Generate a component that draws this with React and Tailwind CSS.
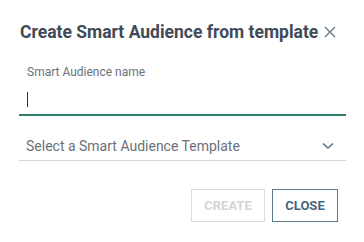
export default function App() {
  return (
    <div className="w-[364px] h-[242px] bg-white" style={{ fontFamily: "Roboto, 'Liberation Sans', sans-serif" }}>
      <div className="pl-[19px] pr-[18px] pt-[21px]">
        <div className="flex items-center justify-between pr-[10px]">
          <h1 className="text-[17.5px] leading-[22px] font-bold text-[#414a57] pl-[1px]">Create Smart Audience from template</h1>
          <svg width="12" height="12" viewBox="0 0 12 12" className="text-[#5f7686]">
            <path d="M1 1L11 11M11 1L1 11" stroke="currentColor" strokeWidth="1.3" fill="none" />
          </svg>
        </div>
        <div className="mt-[21px] border-b-2 border-[#2e7a6c]">
          <div className="pl-[8px] text-[12px] leading-[16px] text-[#6b7079]">Smart Audience name</div>
          <div className="pl-[8px] pt-[4px] h-[34px] flex items-center">
            <div className="w-[1px] h-[15px] bg-[#333]"></div>
          </div>
        </div>
        <div className="mt-[20px] h-[25px] flex items-start justify-between border-b border-[#d3d6db]">
          <span className="pl-[7px] text-[14px] leading-[20px] text-[#6b7079]">Select a Smart Audience Template</span>
          <svg width="12" height="8" viewBox="0 0 12 8" className="mr-[12px] mt-[6px] text-[#4e6a80]">
            <path d="M1 1.5L6 6L11 1.5" stroke="currentColor" strokeWidth="1.4" fill="none" />
          </svg>
        </div>
        <div className="mt-[28px] flex justify-end gap-[7px] pr-[8px]">
          <button className="w-[74px] h-[33px] border border-[#dcdcdc] text-[13px] font-bold text-[#d4d4d4]">CREATE</button>
          <button className="w-[66px] h-[33px] border border-[#57788a] text-[13px] font-bold text-[#46667c]">CLOSE</button>
        </div>
      </div>
    </div>
  );
}
